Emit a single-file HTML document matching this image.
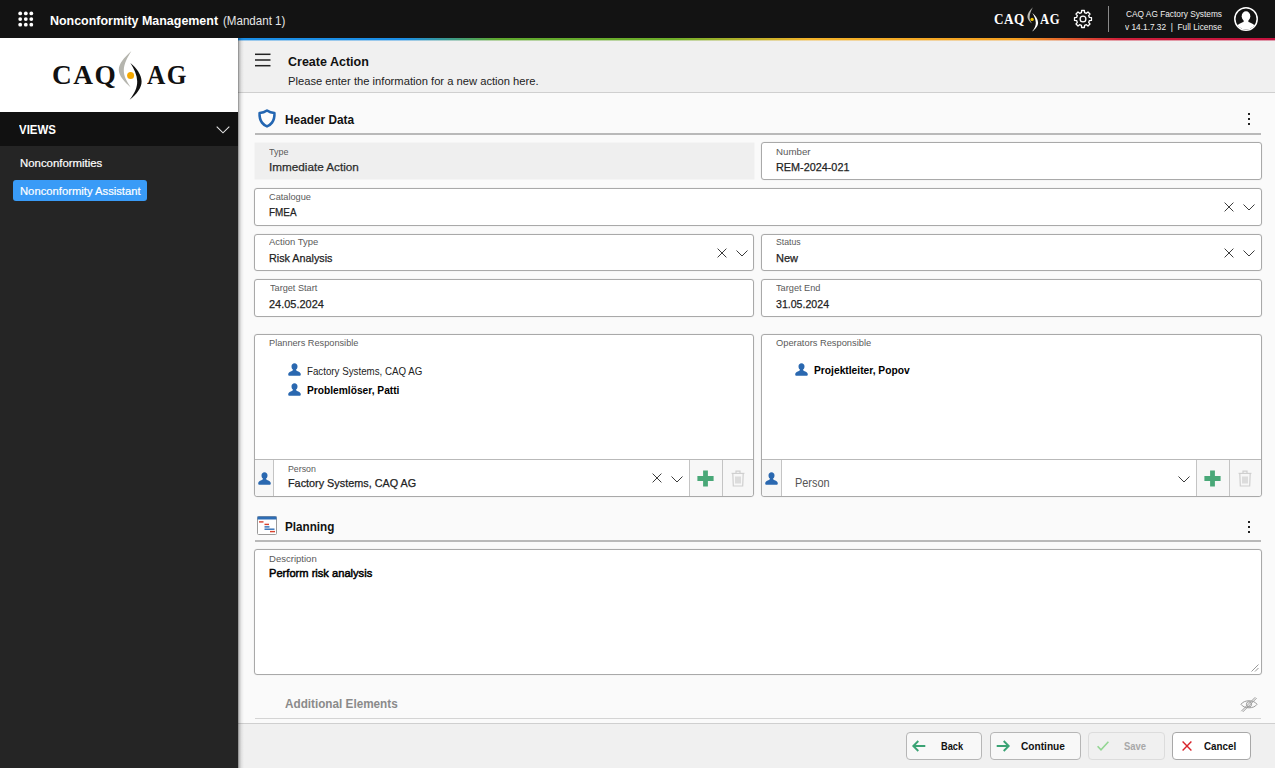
<!DOCTYPE html>
<html lang="en">
<head>
<meta charset="utf-8">
<title>Nonconformity Management</title>
<style>
*{box-sizing:border-box;margin:0;padding:0}
html,body{width:1275px;height:768px;overflow:hidden;background:#fafafa;font-family:"Liberation Sans",sans-serif;color:#222;}
.abs{position:absolute}
.t{position:absolute;white-space:nowrap;line-height:1;transform-origin:0 50%}
#top{position:absolute;left:0;top:0;width:1275px;height:38px;background:#131313}
#rainbow{position:absolute;left:238px;top:38px;width:1037px;height:2px;background:linear-gradient(90deg,#1b8ee6 0%,#1b8ee6 16%,#5fa82e 25%,#6fae2a 42%,#f3b32a 55%,#f5a021 75%,#cf1f3a 85%,#c4123f 100%)}
#rainbow:after{content:"";position:absolute;left:0;top:2px;width:100%;height:1px;background:inherit;opacity:.4}
#logo{position:absolute;left:0;top:38px;width:238px;height:74px;background:#fff}
#side{position:absolute;left:0;top:112px;width:238px;height:656px;background:#252525}
#views{position:absolute;left:0;top:0;width:238px;height:34px;background:#111}
#main{position:absolute;left:238px;top:40px;width:1037px;height:728px;background:#fafafa}
#mhead{position:absolute;left:0;top:0;width:1037px;height:53px;background:#f0f0f0;border-bottom:1px solid #cfcfcf}
#shadow{position:absolute;left:238px;top:38px;width:6px;height:730px;background:linear-gradient(90deg,rgba(0,0,0,.45),rgba(0,0,0,.2) 25%,rgba(0,0,0,.06) 60%,rgba(0,0,0,0))}
#foot{position:absolute;left:238px;top:723px;width:1037px;height:45px;background:#f0f0f0;border-top:1px solid #cfcfcf}
.fld{position:absolute;background:#fff;border:1px solid #a9a9a9;border-radius:3px;box-shadow:0 0 0 0.5px rgba(0,0,0,.04)}
.fld.dis{background:#efefef;border-color:#efefef;border-radius:0}
.lbl{font-size:9.8px;color:#5a5a5a}
.val{font-size:11.6px;color:#222;-webkit-text-stroke:0.25px #222}
.sec{font-size:12px;font-weight:bold;color:#111}
.hr{position:absolute;height:2px;background:#b9b9b9;left:255px;width:1006px}
.btn{position:absolute;top:732px;height:28px;background:#f8f8f8;border:1px solid #b6b6b6;border-radius:4px}
.btn .t{font-size:11.5px;font-weight:bold;color:#111}
.dots{position:absolute;width:2px}
.dots i{display:block;width:2px;height:2px;background:#222;margin-bottom:3px}
.bt{font-size:11px;font-weight:bold;color:#111}
svg{position:absolute;overflow:visible}
</style>
<style id="auto">
#t_title{left:50.2px!important;top:14.5px!important;transform:scaleX(0.981)}
#t_lq1{left:993.8px!important;top:11.8px!important;transform:scaleX(0.921)}
#t_lg1{left:1040.2px!important;top:11.8px!important;transform:scaleX(0.886)}
#t_r1{left:1125.7px!important;top:9.9px!important;transform:scaleX(0.923)}
#t_r2{left:1124.8px!important;top:22.9px!important;transform:scaleX(0.923)}
#t_mand{left:223.0px!important;top:14.5px!important;transform:scaleX(0.912)}
#t_lq2{left:51.5px!important;top:23.2px!important;transform:scaleX(0.976)}
#t_lg2{left:146.6px!important;top:23.2px!important;transform:scaleX(0.905)}
#t_views{left:19.4px!important;top:11.6px!important;transform:scaleX(0.918)}
#t_nc{left:19.5px!important;top:44.5px!important;transform:scaleX(0.982)}
#t_nca{left:19.5px!important;top:72.5px!important;transform:scaleX(0.970)}
#t_ca{left:288.2px!important;top:55.6px!important;transform:scaleX(1.001)}
#t_sub{left:288.0px!important;top:76.2px!important;transform:scaleX(1.000)}
#t_hd{left:285.2px!important;top:114.0px!important;transform:scaleX(0.986)}
#t_type{left:269.4px!important;top:146.5px!important;transform:scaleX(0.914)}
#t_imm{left:269.4px!important;top:160.6px!important;transform:scaleX(1.010)}
#t_num{left:776.2px!important;top:146.5px!important;transform:scaleX(0.991)}
#t_rem{left:776.2px!important;top:160.8px!important;transform:scaleX(0.934)}
#t_cat{left:269.4px!important;top:192.0px!important;transform:scaleX(0.940)}
#t_fmea{left:269.4px!important;top:206.0px!important;transform:scaleX(0.855)}
#t_at{left:269.0px!important;top:237.2px!important;transform:scaleX(0.967)}
#t_ra{left:269.2px!important;top:251.5px!important;transform:scaleX(0.930)}
#t_st{left:776.2px!important;top:237.2px!important;transform:scaleX(0.889)}
#t_new{left:776.2px!important;top:251.5px!important;transform:scaleX(0.950)}
#t_ts{left:269.5px!important;top:282.7px!important;transform:scaleX(0.933)}
#t_d1{left:269.2px!important;top:297.9px!important;transform:scaleX(0.945)}
#t_te{left:776.2px!important;top:282.7px!important;transform:scaleX(0.938)}
#t_d2{left:776.2px!important;top:297.9px!important;transform:scaleX(0.914)}
#t_pr{left:268.8px!important;top:338.1px!important;transform:scaleX(0.938)}
#t_fs1{left:306.6px!important;top:365.5px!important;transform:scaleX(0.928)}
#t_pp{left:306.6px!important;top:385.3px!important;transform:scaleX(0.972)}
#t_p1{left:288.2px!important;top:464.0px!important;transform:scaleX(0.897)}
#t_fs2{left:288.2px!important;top:476.6px!important;transform:scaleX(0.934)}
#t_or{left:776.0px!important;top:338.1px!important;transform:scaleX(0.950)}
#t_pl{left:813.9px!important;top:365.0px!important;transform:scaleX(0.976)}
#t_p2{left:794.6px!important;top:477.3px!important;transform:scaleX(0.911)}
#t_plan{left:285.4px!important;top:521.1px!important;transform:scaleX(0.974)}
#t_desc{left:269.1px!important;top:553.5px!important;transform:scaleX(0.973)}
#t_perf{left:268.5px!important;top:567.5px!important;transform:scaleX(0.967)}
#t_add{left:285.3px!important;top:698.0px!important;transform:scaleX(0.938)}
#t_back{left:940.8px!important;top:741.1px!important;transform:scaleX(0.841)}
#t_cont{left:1021.3px!important;top:741.1px!important;transform:scaleX(0.921)}
#t_save{left:1123.6px!important;top:741.1px!important;transform:scaleX(0.858)}
#t_canc{left:1203.9px!important;top:741.1px!important;transform:scaleX(0.894)}
</style>
</head>
<body>
<div id="top">
  <svg style="left:17px;top:10px" width="18" height="18" viewBox="0 0 18 18"><g fill="#fff"><circle cx="3.2" cy="3.4" r="1.9"/><circle cx="8.8" cy="3.4" r="1.9"/><circle cx="14.3" cy="3.4" r="1.9"/><circle cx="3.2" cy="9.1" r="1.9"/><circle cx="8.8" cy="9.1" r="1.9"/><circle cx="14.3" cy="9.1" r="1.9"/><circle cx="3.2" cy="14.7" r="1.9"/><circle cx="8.8" cy="14.7" r="1.9"/><circle cx="14.3" cy="14.7" r="1.9"/></g></svg>
  <span class="t" id="t_title" style="left:50px;top:13px;font-size:12.7px;font-weight:bold;color:#fff">Nonconformity Management</span>
  
  <!-- small logo -->
  <span class="t" id="t_lq1" style="left:993px;top:11px;font-family:'Liberation Serif',serif;font-weight:bold;font-size:14.3px;color:#fff;letter-spacing:0.6px">CAQ</span>
  <span class="t" id="t_lg1" style="left:1040px;top:11px;font-family:'Liberation Serif',serif;font-weight:bold;font-size:14.3px;color:#fff;letter-spacing:0.6px">AG</span>
  <svg style="left:1025px;top:5px" width="16" height="28" viewBox="0 0 16 28">
    <path d="M7.9 2.3 C4.4 5.6 2.2 9 2.4 12 C2.6 14.6 4.6 16.8 7.2 18.6 C5.4 16.4 4.5 14.4 4.6 12 C4.7 9 6 5.6 7.9 2.3 Z" fill="#b9b9b3"/>
    <path d="M7.3 8 C10.4 10.6 12.9 13.8 13.1 17.4 C13.2 20.6 10.6 24 7.1 26.6 C9.6 23.4 11 20.4 10.8 17.4 C10.6 14 9.2 11 7.3 8 Z" fill="#fff"/>
    <circle cx="7.1" cy="14.4" r="1.7" fill="#f2c500"/>
  </svg>
  <!-- gear -->
  <svg style="left:1073px;top:9px" width="20" height="20" viewBox="0 0 20 20"><path fill="none" stroke="#fff" stroke-width="1.3" stroke-linejoin="round" d="M8.41 3.59 L8.59 1.52 L11.41 1.52 L11.59 3.59 L13.40 4.35 L15.00 3.00 L17.00 5.00 L15.65 6.60 L16.41 8.41 L18.48 8.59 L18.48 11.41 L16.41 11.59 L15.65 13.40 L17.00 15.00 L15.00 17.00 L13.40 15.65 L11.59 16.41 L11.41 18.48 L8.59 18.48 L8.41 16.41 L6.60 15.65 L5.00 17.00 L3.00 15.00 L4.35 13.40 L3.59 11.59 L1.52 11.41 L1.52 8.59 L3.59 8.41 L4.35 6.60 L3.00 5.00 L5.00 3.00 L6.60 4.35 Z"/><circle cx="10" cy="10" r="2.9" fill="none" stroke="#fff" stroke-width="1.3"/></svg>
  <div class="abs" style="left:1108px;top:6px;width:1px;height:26px;background:#8a8a8a"></div>
  <span class="t" id="t_r1" style="left:1126px;top:9px;font-size:9px;color:#f0f0f0">CAQ AG Factory Systems</span>
  <span class="t" id="t_r2" style="left:1125px;top:22px;font-size:9px;color:#f0f0f0">v 14.1.7.32 &nbsp;|&nbsp; Full License</span>
  <!-- avatar -->
  <svg style="left:1234px;top:7px" width="24" height="24" viewBox="0 0 24 24"><defs><clipPath id="avc"><circle cx="12" cy="12" r="10.6"/></clipPath></defs><circle cx="12" cy="12" r="11.2" fill="#131313" stroke="#fff" stroke-width="1.5"/><g clip-path="url(#avc)" fill="#fff"><ellipse cx="12" cy="9.2" rx="4.3" ry="5"/><path d="M9.6 13 V15 C7 15.8 3.6 17 3 20 V24 H21 V20 C20.4 17 17 15.8 14.4 15 V13 Z"/></g></svg>
  <span class="t" id="t_mand" style="left:243px;top:13px;font-size:12.7px;color:#e6e6e6">(Mandant 1)</span>
</div>
<div id="logo">
  <span class="t" id="t_lq2" style="left:52px;top:24px;font-family:'Liberation Serif',serif;font-weight:bold;font-size:28px;color:#111;letter-spacing:1.5px">CAQ</span>
  <span class="t" id="t_lg2" style="left:146px;top:24px;font-family:'Liberation Serif',serif;font-weight:bold;font-size:28px;color:#111;letter-spacing:1.5px">AG</span>
  <svg style="left:116px;top:10px" width="30" height="54" viewBox="0 0 30 54">
    <path d="M15.4 3 C8 9.6 2.6 16 2.8 22 C3 28 8.4 33.8 14.8 39.4 C10.4 33 7.6 27.6 7.8 22 C8 16 11.2 9.6 15.4 3 Z" fill="#b5b5ae"/>
    <path d="M14.4 15 C20.6 20.2 25.4 26.6 25.6 33.2 C25.8 39.6 20.8 46.2 13.6 51.8 C18.6 45.4 21.4 39.4 21.2 33.2 C21 26.8 18.2 21 14.4 15 Z" fill="#111"/>
    <circle cx="14.6" cy="27.4" r="3.5" fill="#f5a800"/>
  </svg>
</div>
<div id="side">
  <div id="views"></div>
  <svg style="left:216px;top:14px" width="14" height="8" viewBox="0 0 14 8"><path d="M0.7 0.7 L7 6.8 L13.3 0.7" stroke="#e4e4e4" stroke-width="1.1" fill="none"/></svg>
  <span class="t" id="t_views" style="left:19px;top:11px;font-size:12.5px;font-weight:bold;color:#fff">VIEWS</span>
  <span class="t" id="t_nc" style="left:19px;top:44px;font-size:11.6px;color:#fff;-webkit-text-stroke:0.2px #fff">Nonconformities</span>
  <div class="abs" style="left:13px;top:68px;width:134px;height:21px;background:#399bf7;border-radius:3px"></div>
  <span class="t" id="t_nca" style="left:19px;top:72px;font-size:11.6px;color:#fff;-webkit-text-stroke:0.2px #fff">Nonconformity Assistant</span>
</div>
<div id="main">
  <div id="mhead"></div>
</div>
<div id="rainbow"></div>

<!-- main header -->
<svg style="left:255px;top:53px" width="16" height="14" viewBox="0 0 16 14"><g stroke="#222" stroke-width="1.5"><line x1="0" y1="1.3" x2="15.5" y2="1.3"/><line x1="0" y1="7" x2="15.5" y2="7"/><line x1="0" y1="12.7" x2="15.5" y2="12.7"/></g></svg>
<span class="t" id="t_ca" style="left:288px;top:54px;font-size:12.5px;font-weight:bold;color:#111">Create Action</span>
<span class="t" id="t_sub" style="left:288px;top:75px;font-size:11.2px;color:#222">Please enter the information for a new action here.</span>

<!-- section: Header Data -->
<svg style="left:258px;top:109px" width="18" height="19" viewBox="0 0 18 19"><path d="M9 1.5 C6.8 3.1 4.2 3.9 1.6 4 C1.4 8 2 11 4 13.6 C5.4 15.4 7 16.6 9 17.4 C11 16.6 12.6 15.4 14 13.6 C16 11 16.6 8 16.4 4 C13.8 3.9 11.2 3.1 9 1.5 Z" fill="#fdfdfd" stroke="#2366b2" stroke-width="2.6" stroke-linejoin="round"/></svg>
<span class="t sec" id="t_hd" style="left:285px;top:113px">Header Data</span>
<div class="dots" style="left:1248px;top:113px"><i></i><i></i><i></i></div>
<div class="hr" style="top:133px"></div>

<div class="fld dis" style="left:255px;top:143px;width:499px;height:36px"></div>
<span class="t lbl" id="t_type" style="left:269px;top:146px">Type</span>
<span class="t val" id="t_imm" style="left:269px;top:160px;color:#333">Immediate Action</span>

<div class="fld" style="left:761px;top:142px;width:501px;height:38px"></div>
<span class="t lbl" id="t_num" style="left:776px;top:146px">Number</span>
<span class="t val" id="t_rem" style="left:776px;top:161px">REM-2024-021</span>

<div class="fld" style="left:254px;top:188px;width:1008px;height:38px"></div>
<span class="t lbl" id="t_cat" style="left:269px;top:192px">Catalogue</span>
<span class="t val" id="t_fmea" style="left:269px;top:206px">FMEA</span>
<svg class="xi" style="left:1224px;top:202px" width="10" height="10" viewBox="0 0 10 10"><path d="M0.6 0.6 L9.4 9.4 M9.4 0.6 L0.6 9.4" stroke="#3c3c3c" stroke-width="1" fill="none"/></svg>
<svg class="ch" style="left:1243px;top:204px" width="12" height="7" viewBox="0 0 12 7"><path d="M0.5 0.5 L6 6 L11.5 0.5" stroke="#3c3c3c" stroke-width="1" fill="none"/></svg>

<div class="fld" style="left:254px;top:234px;width:500px;height:37px"></div>
<span class="t lbl" id="t_at" style="left:269px;top:237px">Action Type</span>
<span class="t val" id="t_ra" style="left:269px;top:252px">Risk Analysis</span>
<svg class="xi" style="left:717px;top:248px" width="10" height="10" viewBox="0 0 10 10"><path d="M0.6 0.6 L9.4 9.4 M9.4 0.6 L0.6 9.4" stroke="#3c3c3c" stroke-width="1" fill="none"/></svg>
<svg class="ch" style="left:736px;top:250px" width="12" height="7" viewBox="0 0 12 7"><path d="M0.5 0.5 L6 6 L11.5 0.5" stroke="#3c3c3c" stroke-width="1" fill="none"/></svg>

<div class="fld" style="left:761px;top:234px;width:501px;height:37px"></div>
<span class="t lbl" id="t_st" style="left:776px;top:237px">Status</span>
<span class="t val" id="t_new" style="left:776px;top:252px">New</span>
<svg class="xi" style="left:1224px;top:248px" width="10" height="10" viewBox="0 0 10 10"><path d="M0.6 0.6 L9.4 9.4 M9.4 0.6 L0.6 9.4" stroke="#3c3c3c" stroke-width="1" fill="none"/></svg>
<svg class="ch" style="left:1243px;top:250px" width="12" height="7" viewBox="0 0 12 7"><path d="M0.5 0.5 L6 6 L11.5 0.5" stroke="#3c3c3c" stroke-width="1" fill="none"/></svg>

<div class="fld" style="left:254px;top:279px;width:500px;height:38px"></div>
<span class="t lbl" id="t_ts" style="left:269px;top:283px">Target Start</span>
<span class="t val" id="t_d1" style="left:269px;top:298px">24.05.2024</span>

<div class="fld" style="left:761px;top:279px;width:501px;height:38px"></div>
<span class="t lbl" id="t_te" style="left:776px;top:283px">Target End</span>
<span class="t val" id="t_d2" style="left:776px;top:298px">31.05.2024</span>

<!-- Planners panel -->
<div class="fld" style="left:254px;top:334px;width:500px;height:163px"></div>
<span class="t lbl" id="t_pr" style="left:269px;top:338px">Planners Responsible</span>
<svg class="pi" style="left:288px;top:363px" width="13" height="13" viewBox="0 0 13 13"><use href="#person"/></svg>
<span class="t" id="t_fs1" style="left:306px;top:365px;font-size:10.5px;color:#222">Factory Systems, CAQ AG</span>
<svg class="pi" style="left:288px;top:383px" width="13" height="13" viewBox="0 0 13 13"><use href="#person"/></svg>
<span class="t" id="t_pp" style="left:306px;top:385px;font-size:10.5px;font-weight:bold;color:#000">Problemlöser, Patti</span>
<div class="abs" style="left:255px;top:459px;width:498px;height:1px;background:#b9b9b9"></div>
<div class="abs" style="left:255px;top:460px;width:18px;height:36px;background:#f7f7f7;border-bottom-left-radius:3px"></div>
<div class="abs" style="left:273px;top:460px;width:1px;height:36px;background:#c4c4c4"></div>
<svg class="pi" style="left:257.5px;top:472px" width="13" height="13" viewBox="0 0 13 13"><use href="#person"/></svg>
<span class="t lbl" id="t_p1" style="left:288px;top:463px">Person</span>
<span class="t val" id="t_fs2" style="left:288px;top:477px">Factory Systems, CAQ AG</span>
<svg class="xi" style="left:652px;top:473px" width="10" height="10" viewBox="0 0 10 10"><path d="M0.6 0.6 L9.4 9.4 M9.4 0.6 L0.6 9.4" stroke="#3c3c3c" stroke-width="1" fill="none"/></svg>
<svg class="ch" style="left:671px;top:475.5px" width="12" height="7" viewBox="0 0 12 7"><path d="M0.5 0.5 L6 6 L11.5 0.5" stroke="#3c3c3c" stroke-width="1" fill="none"/></svg>
<div class="abs" style="left:689px;top:460px;width:64px;height:36px;background:#f7f7f7;border-bottom-right-radius:3px"></div>
<div class="abs" style="left:689px;top:460px;width:1px;height:36px;background:#c4c4c4"></div>
<div class="abs" style="left:722px;top:460px;width:1px;height:36px;background:#c4c4c4"></div>
<svg style="left:697px;top:470px" width="17" height="17" viewBox="0 0 17 17"><path d="M6.1 0.4 H10.9 V6.1 H16.6 V10.9 H10.9 V16.6 H6.1 V10.9 H0.4 V6.1 H6.1 Z" fill="#49a878"/></svg>
<svg style="left:731px;top:470px" width="14" height="17" viewBox="0 0 14 17"><use href="#trash"/></svg>

<!-- Operators panel -->
<div class="fld" style="left:761px;top:334px;width:501px;height:163px"></div>
<span class="t lbl" id="t_or" style="left:776px;top:338px">Operators Responsible</span>
<svg class="pi" style="left:795px;top:363px" width="13" height="13" viewBox="0 0 13 13"><use href="#person"/></svg>
<span class="t" id="t_pl" style="left:813px;top:365px;font-size:10.5px;font-weight:bold;color:#000">Projektleiter, Popov</span>
<div class="abs" style="left:762px;top:459px;width:499px;height:1px;background:#b9b9b9"></div>
<div class="abs" style="left:762px;top:460px;width:19px;height:36px;background:#f7f7f7;border-bottom-left-radius:3px"></div>
<div class="abs" style="left:781px;top:460px;width:1px;height:36px;background:#c4c4c4"></div>
<svg class="pi" style="left:764.5px;top:472px" width="13" height="13" viewBox="0 0 13 13"><use href="#person"/></svg>
<span class="t" id="t_p2" style="left:794px;top:478px;font-size:12px;color:#555">Person</span>
<svg class="ch" style="left:1178px;top:475.5px" width="12" height="7" viewBox="0 0 12 7"><path d="M0.5 0.5 L6 6 L11.5 0.5" stroke="#3c3c3c" stroke-width="1" fill="none"/></svg>
<div class="abs" style="left:1196px;top:460px;width:65px;height:36px;background:#f7f7f7;border-bottom-right-radius:3px"></div>
<div class="abs" style="left:1196px;top:460px;width:1px;height:36px;background:#c4c4c4"></div>
<div class="abs" style="left:1229px;top:460px;width:1px;height:36px;background:#c4c4c4"></div>
<svg style="left:1204px;top:470px" width="17" height="17" viewBox="0 0 17 17"><path d="M6.1 0.4 H10.9 V6.1 H16.6 V10.9 H10.9 V16.6 H6.1 V10.9 H0.4 V6.1 H6.1 Z" fill="#49a878"/></svg>
<svg style="left:1238px;top:470px" width="14" height="17" viewBox="0 0 14 17"><use href="#trash"/></svg>

<!-- section: Planning -->
<svg style="left:257px;top:516px" width="20" height="19" viewBox="0 0 20 19"><rect x="0.5" y="0.5" width="19" height="18" rx="1" fill="#fff" stroke="#9a9a9a"/><rect x="0.5" y="0.5" width="19" height="3" fill="#2d6db5"/><rect x="2" y="5.2" width="4.5" height="1.4" fill="#d8432f"/><rect x="7.5" y="7.7" width="4.5" height="1.4" fill="#d8432f"/><rect x="7.5" y="10.2" width="5" height="1.4" fill="#2d6db5"/><rect x="7.5" y="12.5" width="10" height="1.4" fill="#2d6db5"/><rect x="13" y="14.9" width="5" height="1.4" fill="#d8432f"/></svg>
<span class="t sec" id="t_plan" style="left:285px;top:520px">Planning</span>
<div class="dots" style="left:1248px;top:521px"><i></i><i></i><i></i></div>
<div class="hr" style="top:540px"></div>

<div class="fld" style="left:254px;top:549px;width:1008px;height:126px"></div>
<span class="t lbl" id="t_desc" style="left:269px;top:553px">Description</span>
<span class="t" id="t_perf" style="left:268px;top:567px;font-size:11.5px;color:#000;-webkit-text-stroke:0.5px #000">Perform risk analysis</span>
<svg style="left:1250px;top:663px" width="9" height="9" viewBox="0 0 9 9"><path d="M8.5 1.5 L1.5 8.5 M8.5 5 L5 8.5" stroke="#999" stroke-width="1" fill="none"/></svg>

<!-- Additional Elements -->
<span class="t" id="t_add" style="left:285px;top:698px;font-size:12.5px;font-weight:bold;color:#8a8a8a">Additional Elements</span>
<svg style="left:1240px;top:696px" width="18" height="17" viewBox="0 0 18 17"><g fill="none" stroke="#9a9a9a" stroke-width="1"><path d="M1 8.3 C4 3.6 14 3.6 17 8.3 C14 13 4 13 1 8.3 Z"/><circle cx="9" cy="8.3" r="2.6"/><path d="M1.3 15.2 L15.3 1.2 M2.8 15.9 L16.6 2.1"/></g></svg>
<div class="hr" style="top:718px;height:1px;background:#d4d4d4"></div>

<div id="foot"></div>
<!-- buttons -->
<div class="btn" style="left:906px;width:76px"></div>
<svg style="left:911.5px;top:740px" width="14" height="12" viewBox="0 0 14 12"><path d="M13.3 6 H1.6 M6.3 1 L1.3 6 L6.3 11" stroke="#3aa374" stroke-width="1.9" fill="none"/></svg>
<span class="t bt" id="t_back" style="left:941px;top:741px">Back</span>
<div class="btn" style="left:990px;width:91px"></div>
<svg style="left:996px;top:740px" width="14" height="12" viewBox="0 0 14 12"><path d="M0.7 6 H12.4 M7.7 1 L12.7 6 L7.7 11" stroke="#3aa374" stroke-width="1.9" fill="none"/></svg>
<span class="t bt" id="t_cont" style="left:1021px;top:741px">Continue</span>
<div class="btn" style="left:1088px;width:77px;background:#f0f0f0;border-color:#dcdcdc"></div>
<svg style="left:1097px;top:741px" width="12" height="10" viewBox="0 0 12 10"><path d="M0.6 5.2 L4 8.8 L11.4 0.8" stroke="#93d693" stroke-width="1.6" fill="none"/></svg>
<span class="t bt" id="t_save" style="left:1124px;top:741px;color:#a8a8a8">Save</span>
<div class="btn" style="left:1172px;width:79px;background:#fff;border-color:#a8a8a8"></div>
<svg style="left:1182px;top:741px" width="10" height="10" viewBox="0 0 10 10"><path d="M0.6 0.6 L9.4 9.4 M9.4 0.6 L0.6 9.4" stroke="#d8232a" stroke-width="1.4" fill="none"/></svg>
<span class="t bt" id="t_canc" style="left:1204px;top:741px">Cancel</span>

<div id="shadow"></div>

<svg width="0" height="0" style="left:0;top:0"><defs>
<symbol id="person" viewBox="0 0 13 13"><path d="M6.5 0.3 C8.3 0.3 9.5 1.6 9.5 3.4 C9.5 4.8 8.8 6 8 6.6 C8 7.4 8.4 7.8 9.6 8.2 C11.6 8.9 12.7 9.6 12.8 11.4 C12.8 12.3 12.3 12.7 11.4 12.7 H1.6 C0.7 12.7 0.2 12.3 0.2 11.4 C0.3 9.6 1.4 8.9 3.4 8.2 C4.6 7.8 5 7.4 5 6.6 C4.2 6 3.5 4.8 3.5 3.4 C3.5 1.6 4.7 0.3 6.5 0.3 Z" fill="#2a68b0"/></symbol>
<symbol id="trash" viewBox="0 0 14 17"><g fill="none" stroke="#cfcfcf" stroke-width="1.2"><path d="M0.6 3.4 H13.4"/><path d="M5 3.2 V1.2 H9 V3.2"/><path d="M1.8 3.6 L2.3 16 H11.7 L12.2 3.6"/></g><rect x="4" y="6.5" width="6" height="7" fill="#dcdcdc"/></symbol>
</defs></svg>
</body>
</html>
